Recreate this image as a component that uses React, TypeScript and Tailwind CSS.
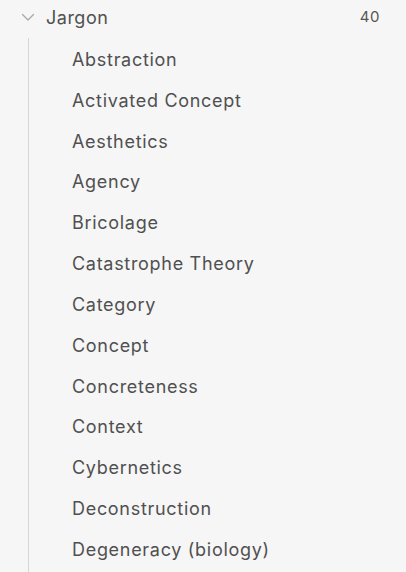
import React from "react";

const items = [
  "Abstraction",
  "Activated Concept",
  "Aesthetics",
  "Agency",
  "Bricolage",
  "Catastrophe Theory",
  "Category",
  "Concept",
  "Concreteness",
  "Context",
  "Cybernetics",
  "Deconstruction",
  "Degeneracy (biology)",
];

export default function App() {
  return (
    <div
      className="w-[406px] h-[572px] bg-[#f6f6f6] overflow-hidden text-[#505050] flex flex-col"
      style={{ fontFamily: "Inter, 'Noto Sans', sans-serif" }}
    >
      <div className="flex items-center h-[34px] pl-[20px] pr-[26px] shrink-0">
        <svg width="16" height="16" viewBox="0 0 16 16" className="mr-[10px]">
          <path d="M2.5 5.5 L8 11 L13.5 5.5" fill="none" stroke="#aaaaaa" strokeWidth="1.4" strokeLinecap="round" strokeLinejoin="round" />
        </svg>
        <span className="text-[18px] tracking-[0.5px] flex-1">Jargon</span>
        <span className="text-[15px] tracking-[0.5px] text-[#555]">40</span>
      </div>
      <div className="ml-[28px] mt-[4px] border-l border-[#d6d6d6] pt-[1px] flex-1">
        {items.map((t) => (
          <div key={t} className="h-[40.83px] flex items-center pl-[43px] text-[18px] tracking-[0.7px]">
            {t}
          </div>
        ))}
      </div>
    </div>
  );
}
